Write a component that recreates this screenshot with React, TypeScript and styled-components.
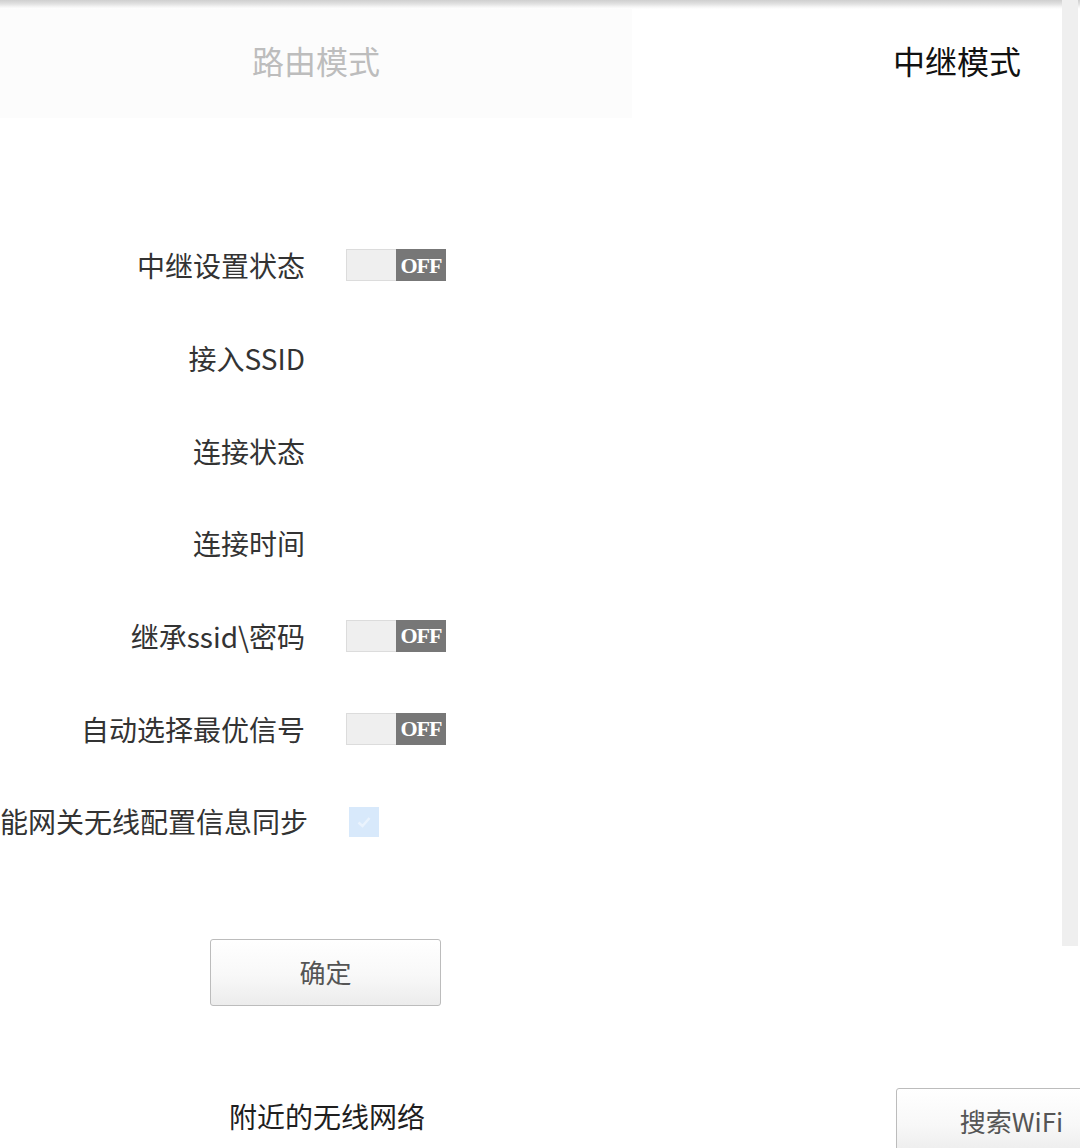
import styled, { createGlobalStyle } from "styled-components";

const GlobalStyle = createGlobalStyle`
  html, body {
    margin: 0;
    padding: 0;
    background: #ffffff;
    overflow: hidden;
  }
  body {
    font-family: "Noto Sans CJK SC", "Noto Sans", sans-serif;
  }
`;

const Page = styled.div`
  position: relative;
  width: 1080px;
  height: 1148px;
  overflow: hidden;
  background: #ffffff;
`;

const TopShade = styled.div`
  height: 9px;
  background: linear-gradient(to bottom, #cfcfcf 0%, #e2e2e2 45%, #f7f7f7 80%, #ffffff 100%);
`;

const TabBar = styled.div`
  display: flex;
  height: 109px;
`;

const Tab = styled.div<{ $active?: boolean }>`
  display: flex;
  align-items: center;
  height: 100%;
  font-size: 32px;
  line-height: 1;
  padding-bottom: 8px;
  box-sizing: border-box;
  ${({ $active }) =>
    $active
      ? `
    flex: 1;
    padding-left: 261px;
    color: #111111;
    background: #ffffff;
  `
      : `
    flex: 0 0 632px;
    justify-content: center;
    color: #bdbdbd;
    background: #fcfcfc;
  `}
`;

const Form = styled.div`
  margin-top: 101px;
  display: flex;
  flex-direction: column;
`;

const Row = styled.div`
  display: flex;
  align-items: center;
  height: 92.67px;
`;

const Label = styled.div`
  flex: 0 0 305px;
  display: flex;
  justify-content: flex-end;
  white-space: nowrap;
  font-size: 28px;
  line-height: 1;
  color: #333333;
`;

const Control = styled.div`
  margin-left: 41px;
  display: flex;
  align-items: center;
`;

const Switch = styled.div`
  display: flex;
  width: 100px;
  height: 32px;
`;

const SwitchTrack = styled.div`
  flex: 0 0 50px;
  box-sizing: border-box;
  background: #efefef;
  border: 1px solid #dcdcdc;
  border-right: none;
`;

const SwitchKnob = styled.div`
  flex: 1;
  display: flex;
  align-items: center;
  justify-content: center;
  padding-top: 1px;
  background: #777777;
  color: #ffffff;
  font-family: "Liberation Serif", serif;
  font-weight: 700;
  font-size: 22px;
  letter-spacing: -1px;
  line-height: 1;
`;

const CheckBox = styled.div`
  width: 30px;
  height: 30px;
  margin-top: 2px;
  background: #d8e9fb;
  display: flex;
  align-items: center;
  justify-content: center;
`;

const Button = styled.div`
  width: 231px;
  height: 67px;
  box-sizing: border-box;
  border: 1px solid #bcbcbc;
  border-radius: 3px;
  background: linear-gradient(to bottom, #ffffff 0%, #f8f8f8 55%, #ececec 100%);
  box-shadow: inset 0 1px 0 #ffffff;
  display: flex;
  align-items: center;
  justify-content: center;
  font-size: 26px;
  color: #555555;
  line-height: 1;
  flex-shrink: 0;
`;

const SubmitWrap = styled.div`
  margin-top: 71px;
  padding-left: 210px;
`;

const Nearby = styled.div`
  margin-top: 82px;
  display: flex;
  align-items: flex-start;
`;

const NearbyTitle = styled.div`
  flex: 0 0 896px;
  box-sizing: border-box;
  padding-left: 229px;
  padding-top: 12px;
  font-size: 28px;
  line-height: 32px;
  color: #1f1f1f;
  white-space: nowrap;
`;

const ScrollTrack = styled.div`
  position: absolute;
  top: 0;
  right: 2px;
  width: 16px;
  height: 946px;
  background: #efefef;
`;

function OffSwitch() {
  return (
    <Switch>
      <SwitchTrack />
      <SwitchKnob>OFF</SwitchKnob>
    </Switch>
  );
}

const rows: { label: string; control?: "switch" | "check" }[] = [
  { label: "中继设置状态", control: "switch" },
  { label: "接入SSID" },
  { label: "连接状态" },
  { label: "连接时间" },
  { label: "继承ssid\\密码", control: "switch" },
  { label: "自动选择最优信号", control: "switch" },
  { label: "能网关无线配置信息同步", control: "check" },
];

export default function App() {
  return (
    <>
      <GlobalStyle />
      <Page>
        <TopShade />
        <TabBar>
          <Tab>路由模式</Tab>
          <Tab $active>中继模式</Tab>
        </TabBar>

        <Form>
          {rows.map((row, i) => (
            <Row key={i}>
              <Label>{row.label}</Label>
              <Control>
                {row.control === "switch" && <OffSwitch />}
                {row.control === "check" && (
                  <CheckBox>
                    <svg width="18" height="18" viewBox="0 0 18 18">
                      <path d="M3.5 9.5 L7.5 13 L14.5 5" fill="none" stroke="#eaf3fd" strokeWidth="2.4" />
                    </svg>
                  </CheckBox>
                )}
              </Control>
            </Row>
          ))}
        </Form>

        <SubmitWrap>
          <Button>确定</Button>
        </SubmitWrap>

        <Nearby>
          <NearbyTitle>附近的无线网络</NearbyTitle>
          <Button>搜索WiFi</Button>
        </Nearby>

        <ScrollTrack />
      </Page>
    </>
  );
}
